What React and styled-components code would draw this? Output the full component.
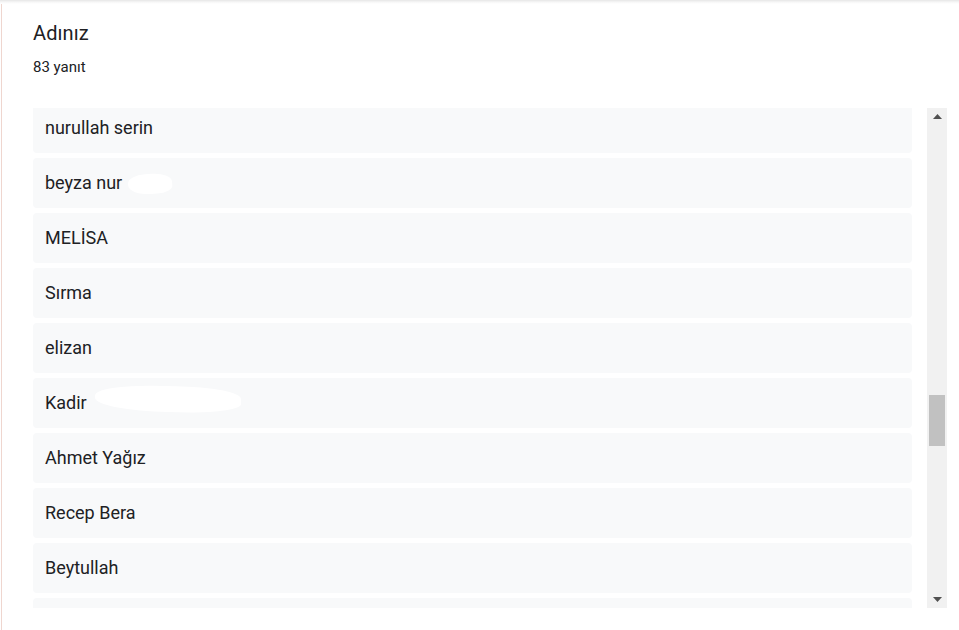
import React, { useLayoutEffect, useRef, useState } from 'react';
import styled, { createGlobalStyle } from 'styled-components';

const GlobalStyle = createGlobalStyle`
  html, body {
    margin: 0;
    padding: 0;
    background: #ffffff;
    font-family: Roboto, "Liberation Sans", Arial, sans-serif;
    color: #202124;
  }
`;

const Page = styled.div`
  width: 959px;
  height: 630px;
  overflow: hidden;
  background: #fff;
`;

const TopShade = styled.div`
  height: 4px;
  background: linear-gradient(#e6e6e6, #f6f6f6 50%, #ffffff);
`;

const Card = styled.section`
  margin-left: 1px;
  border-left: 1px solid #efd6cf;
  height: 626px;
  padding: 0 0 0 31px;
  box-sizing: border-box;
`;

const Title = styled.h2`
  margin: 0;
  padding-top: 16px;
  font-size: 20px;
  font-weight: 400;
  line-height: 26px;
  color: #202124;
  letter-spacing: 0.1px;
`;

const Count = styled.div`
  margin-top: 11px;
  font-size: 15px;
  line-height: 20px;
  color: #202124;
`;

const ListFrame = styled.div`
  margin-top: 31px;
  display: flex;
  height: 500px;
`;

const List = styled.div`
  width: 894px;
  height: 500px;
  overflow-y: auto;
  scrollbar-width: none;
  display: flex;
  flex-direction: column;
  gap: 5px;
  &::-webkit-scrollbar { display: none; }
`;

const Row = styled.div`
  flex: 0 0 50px;
  box-sizing: border-box;
  margin-right: 15px;
  background: #f8f9fa;
  border-radius: 4px;
  display: flex;
  align-items: center;
  padding: 0 12px 2px;
  font-size: 18px;
  color: #202124;
`;

const Redact = styled.span`
  display: inline-block;
  width: ${p => p.$w}px;
  height: ${p => p.$h}px;
  margin-left: ${p => p.$gap}px;
  background: #fff;
  border-radius: 40% 45% 35% 50%;
  transform: rotate(${p => p.$tilt}deg) translateY(${p => p.$dy}px);
`;

const Scrollbar = styled.div`
  width: 20px;
  height: 500px;
  background: #f1f1f1;
  display: flex;
  flex-direction: column;
`;

const Arrow = styled.div`
  flex: 0 0 17px;
  display: flex;
  align-items: center;
  justify-content: center;
  color: #505050;
`;

const Track = styled.div`
  flex: 1;
  position: relative;
`;

const Thumb = styled.div`
  position: absolute;
  left: 2px;
  right: 2px;
  background: #c1c1c1;
`;

const names = [
  'Ayşe', 'Mehmet Ali', 'Zeynep', 'Emre', 'Elif Naz', 'Burak', 'Hatice', 'Yusuf',
  'Merve', 'Ömer Faruk', 'Esra', 'Kerem', 'Büşra', 'Furkan', 'İrem', 'Hüseyin',
  'Selin', 'Mustafa', 'Ecrin', 'Berat', 'Rabia', 'Enes', 'Nisa', 'Emir',
  'Kübra', 'Arda', 'Sude', 'Eren', 'Defne', 'Batuhan', 'Azra', 'Umut',
  'Beyza', 'Talha', 'Ceren', 'Oğuz', 'Damla', 'Yiğit', 'Gizem', 'Çağan',
  'Meryem', 'Tuna', 'Buse', 'Alperen', 'Eylül', 'Halil', 'Sena', 'Doruk',
  'nurullah serin', 'beyza nur', 'MELİSA', 'Sırma', 'elizan', 'Kadir',
  'Ahmet Yağız', 'Recep Bera', 'Beytullah', 'Fatma',
  'İbrahim', 'Asya', 'Kaan', 'Melek', 'Serkan', 'Duru', 'Bora', 'Nehir',
  'Cem', 'Lara', 'Onur', 'Havva', 'Deniz', 'Yaren', 'Taha', 'Ela',
  'Sinan', 'Aleyna', 'Barış', 'Miray', 'Tolga', 'Nazlı', 'Ege', 'Şeyma', 'Hakan'
];

// white smudges that hide surnames in the screenshot
const hidden = {
  'beyza nur': { w: 44, h: 20, gap: 6, tilt: -4, dy: 2 },
  Kadir: { w: 146, h: 26, gap: 8, tilt: 1, dy: -3 },
};

const TRACK = 466;

export default function App() {
  const listRef = useRef(null);
  const [thumb, setThumb] = useState({ top: 0, height: 50 });

  const measure = () => {
    const el = listRef.current;
    if (!el) return;
    const height = Math.max(20, (TRACK * el.clientHeight) / el.scrollHeight);
    const max = el.scrollHeight - el.clientHeight;
    const top = max > 0 ? (el.scrollTop / max) * (TRACK - height) : 0;
    setThumb({ top, height });
  };

  useLayoutEffect(() => {
    if (listRef.current) listRef.current.scrollTop = 48 * 55 + 5;
    measure();
  }, []);

  return (
    <Page>
      <GlobalStyle />
      <TopShade />
      <Card>
        <Title>Adınız</Title>
        <Count>83 yanıt</Count>
        <ListFrame>
          <List ref={listRef} onScroll={measure}>
            {names.map((n, i) => {
              const r = hidden[n];
              return (
                <Row key={i}>
                  {n}
                  {r && <Redact $w={r.w} $h={r.h} $gap={r.gap} $tilt={r.tilt} $dy={r.dy} />}
                </Row>
              );
            })}
          </List>
          <Scrollbar>
            <Arrow>
              <svg width="9" height="5" viewBox="0 0 9 5"><path d="M4.5 0L9 5H0z" fill="currentColor" /></svg>
            </Arrow>
            <Track>
              <Thumb style={{ top: thumb.top, height: thumb.height }} />
            </Track>
            <Arrow>
              <svg width="9" height="5" viewBox="0 0 9 5"><path d="M0 0h9L4.5 5z" fill="currentColor" /></svg>
            </Arrow>
          </Scrollbar>
        </ListFrame>
      </Card>
    </Page>
  );
}
